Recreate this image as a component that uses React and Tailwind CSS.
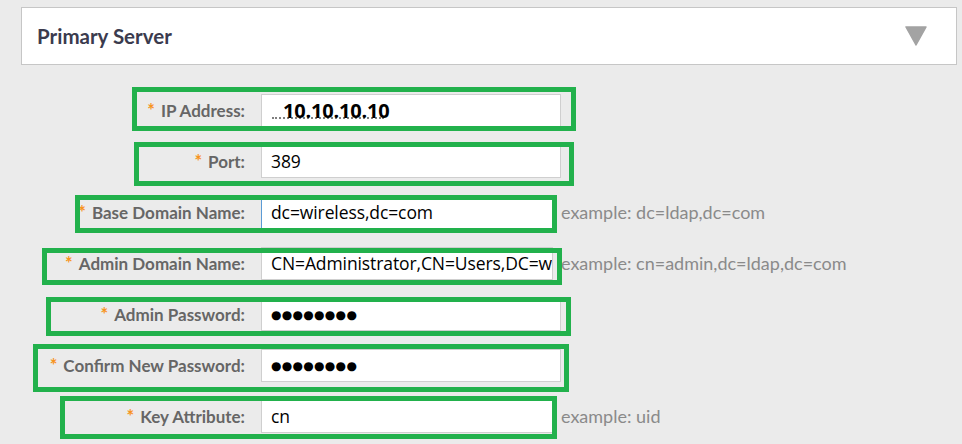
const fields = [
  { label: 'IP Address:', value: '10.10.10.10', kind: 'ip', width: 'w-[300px]', box: 'left-[132px] top-[-7px] w-[444px] h-[44px]' },
  { label: 'Port:', value: '389', width: 'w-[300px]', box: 'left-[134px] top-[-3px] w-[440px] h-[44px]' },
  { label: 'Base Domain Name:', value: 'dc=wireless,dc=com', focused: true, width: 'w-[292px]', example: 'example: dc=ldap,dc=com', box: 'left-[75px] top-[-1px] w-[482px] h-[38px]' },
  { label: 'Admin Domain Name:', value: 'CN=Administrator,CN=Users,DC=wireless,DC=com', width: 'w-[292px]', example: 'example: cn=admin,dc=ldap,dc=com', box: 'left-[42px] top-[1px] w-[520px] h-[37px]' },
  { label: 'Admin Password:', value: '●●●●●●●●', kind: 'password', width: 'w-[300px]', box: 'left-[46px] top-[-1px] w-[525px] h-[39px]' },
  { label: 'Confirm New Password:', value: '●●●●●●●●', kind: 'password', width: 'w-[300px]', box: 'left-[33px] top-[-5px] w-[536px] h-[48px]' },
  { label: 'Key Attribute:', value: 'cn', width: 'w-[292px]', example: 'example: uid', box: 'left-[60px] top-[-4px] w-[497px] h-[43px]' },
]

const FieldValue = ({ field }) => {
  if (field.kind === 'ip') {
    return (
      <div className="relative h-full flex items-center pl-[21px]">
        <div className="absolute left-[10px] bottom-[7px] w-[112px] border-b-2 border-dotted border-black/50" />
        <span className="relative font-['Open_Sans',sans-serif] font-bold text-[20px] text-black tracking-[-0.2px]">{field.value}</span>
      </div>
    )
  }
  if (field.kind === 'password') {
    return (
      <div className="h-full flex items-center pl-[9px]">
        <span className="font-['DejaVu_Sans',sans-serif] text-[12px] text-black tracking-[0.3px]">{field.value}</span>
      </div>
    )
  }
  return (
    <div className="h-full flex items-center pl-[9px] overflow-hidden whitespace-nowrap">
      <span className="font-['Open_Sans',sans-serif] text-[17.5px] text-black tracking-[-0.1px]">{field.value}</span>
    </div>
  )
}

const FieldRow = ({ field }) => (
  <div className="relative flex items-center h-[33px]">
    <div className="w-[245px] flex justify-end items-center gap-[6px] whitespace-nowrap">
      <span className="text-[#f7941d] text-[18px] font-['Lato',sans-serif] font-bold leading-none -translate-y-[1px]">*</span>
      <span className="text-[#666666] text-[17px] font-['Lato',sans-serif] font-bold">{field.label}</span>
    </div>
    <div className={`ml-[16px] h-full bg-white border ${field.focused ? 'border-[#5b9bd5]' : 'border-[#cfcfcf]'} ${field.width}`}>
      <FieldValue field={field} />
    </div>
    {field.example && (
      <span className="ml-[8px] text-[#8a8a8a] text-[18px] font-['Lato',sans-serif] whitespace-nowrap">{field.example}</span>
    )}
    <div className={`absolute border-[5px] border-[#22b14c] pointer-events-none ${field.box}`} />
  </div>
)

const App = () => (
  <div className="w-[962px] h-[444px] bg-[#ebebeb] overflow-hidden">
    <div className="ml-[21px] mt-[7px] w-[936px] h-[58px] bg-white border border-[#c6c6c6] flex items-center justify-between pl-[15px] pr-[29px]">
      <h2 className="font-['Lato',sans-serif] font-bold text-[20.5px] text-[#3b3b4e]">Primary Server</h2>
      <svg width="22" height="21" viewBox="0 0 22 21">
        <polygon points="1,1 21,1 11,19" fill="#a3a3a3" stroke="#a3a3a3" strokeWidth="1.5" strokeLinejoin="round" />
      </svg>
    </div>
    <div className="mt-[29px] flex flex-col gap-[18px]">
      {fields.map((f) => (
        <FieldRow key={f.label} field={f} />
      ))}
    </div>
  </div>
)

export default App
